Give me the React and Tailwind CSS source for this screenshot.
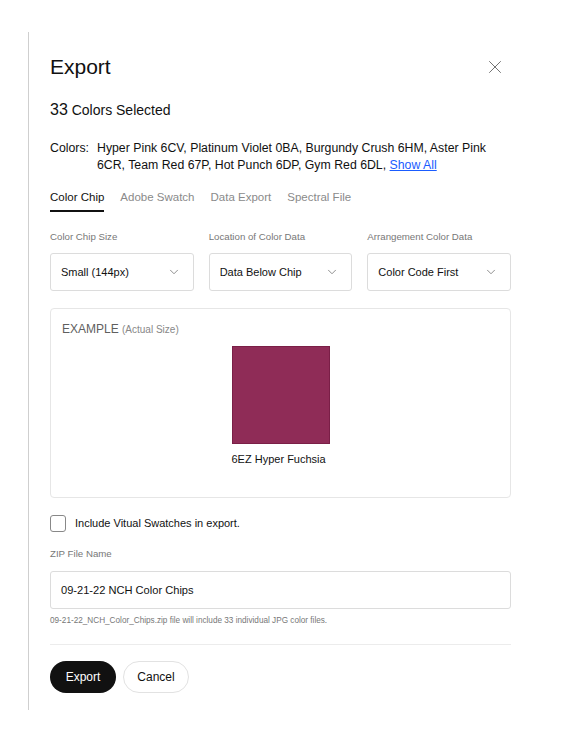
import React, { useState } from 'react';
import { X, ChevronDown } from 'lucide-react';

const colors = 'Hyper Pink 6CV, Platinum Violet 0BA, Burgundy Crush 6HM, Aster Pink 6CR, Team Red 67P, Hot Punch 6DP, Gym Red 6DL,';
const tabs = ['Color Chip', 'Adobe Swatch', 'Data Export', 'Spectral File'];

function SelectBox({ label, value }) {
  return (
    <div className="flex flex-col">
      <span className="text-[9.7px] leading-[12px] text-[#777]">{label}</span>
      <div className="mt-[10px] flex h-[38px] items-center justify-between rounded-[3px] border border-[#dcdcdc] pl-[10px] pr-[12px]">
        <span className="text-[11px] text-[#111]">{value}</span>
        <ChevronDown className="h-[14px] w-[14px] text-[#666]" strokeWidth={1.25} />
      </div>
    </div>
  );
}

export default function App() {
  const [tab, setTab] = useState('Color Chip');
  const [virtual, setVirtual] = useState(false);

  return (
    <div className="h-[743px] w-[561px] bg-white pl-[28px] pt-[32px] font-['Liberation_Sans',Arial,sans-serif] text-[#111]">
      <div className="flex h-[678px] w-[490px] flex-col border-l border-[#cfcfcf] pl-[21px] pr-[7px]">
        {/* Header */}
        <div className="mt-[21px] flex items-center justify-between">
          <h1 className="text-[21px] leading-[28px]">Export</h1>
          <button className="mr-[5px] text-[#555]">
            <X className="h-[22px] w-[22px]" strokeWidth={0.9} />
          </button>
        </div>

        <p className="mt-[19px] text-[14px] leading-[20px]">
          <span className="text-[16px]">33</span> Colors Selected
        </p>

        <div className="mt-[20px] flex text-[12.3px] leading-[17px]">
          <span className="w-[47px] shrink-0">Colors:</span>
          <p>
            {colors} <a href="#" className="text-[#1a5cff] underline">Show All</a>
          </p>
        </div>

        {/* Tabs */}
        <div className="mt-[15px] flex gap-[16px] text-[11.5px] leading-[16px]">
          {tabs.map((t) => (
            <button
              key={t}
              onClick={() => setTab(t)}
              className={
                t === tab
                  ? 'border-b-2 border-[#111] pb-[5px] text-[#111]'
                  : 'border-b-2 border-transparent pb-[5px] text-[#8a8a8a]'
              }
            >
              {t}
            </button>
          ))}
        </div>

        <div className="mt-[19px] grid grid-cols-3 gap-[15px]">
          <SelectBox label="Color Chip Size" value="Small (144px)" />
          <SelectBox label="Location of Color Data" value="Data Below Chip" />
          <SelectBox label="Arrangement Color Data" value="Color Code First" />
        </div>

        {/* Example preview */}
        <div className="mt-[17px] flex h-[190px] flex-col rounded-[4px] border border-[#e6e6e6] px-[11px] pt-[12px]">
          <p className="text-[12px] leading-[16px] text-[#5f5f5f]">
            EXAMPLE <span className="text-[10px] text-[#888]">(Actual Size)</span>
          </p>
          <div className="mt-[8px] flex justify-center">
            <div className="flex flex-col">
              <div className="h-[98px] w-[98px] border border-[#7a1f47] bg-[#8f2c57]" />
              <span className="mt-[8px] text-[11px] leading-[14px]">6EZ Hyper Fuchsia</span>
            </div>
          </div>
        </div>

        <label className="mt-[17px] flex items-center gap-[9px]">
          <input
            type="checkbox"
            checked={virtual}
            onChange={() => setVirtual(!virtual)}
            className="h-[17px] w-[16px] appearance-none rounded-[3px] border border-[#888]"
          />
          <span className="text-[11px]">Include Vitual Swatches in export.</span>
        </label>

        <span className="mt-[16px] text-[9.7px] leading-[12px] text-[#777]">ZIP File Name</span>
        <div className="mt-[11px] flex h-[38px] items-center rounded-[3px] border border-[#dcdcdc] px-[10px] text-[11.1px]">
          09-21-22 NCH Color Chips
        </div>
        <p className="mt-[7px] text-[8.2px] leading-[10px] text-[#777]">
          09-21-22_NCH_Color_Chips.zip file will include 33 individual JPG color files.
        </p>

        <div className="mt-[18px] border-t border-[#ececec]" />

        {/* Actions */}
        <div className="mt-[16px] flex gap-[7px] text-[12px]">
          <button className="h-[32px] w-[66px] rounded-full bg-[#111] text-white">Export</button>
          <button className="h-[32px] w-[66px] rounded-full border border-[#e2e2e2] text-[#111]">Cancel</button>
        </div>
      </div>
    </div>
  );
}
